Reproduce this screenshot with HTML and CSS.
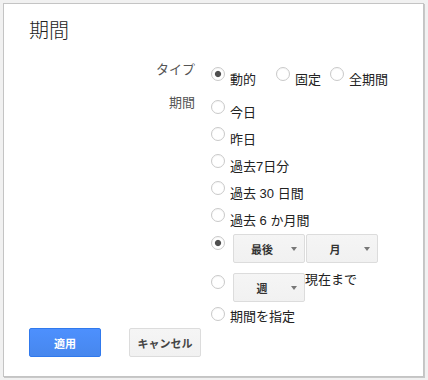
FILE: index.html
```html
<!DOCTYPE html>
<html lang="ja">
<head>
<meta charset="utf-8">
<title>期間</title>
<link rel="stylesheet" href="styles.css">
</head>
<body>
<div class="dialog">
  <h1 class="title">期間</h1>
  <div class="form">
    <div class="label">タイプ</div>
    <div class="type-opts">
      <label class="topt first"><span class="radio checked"></span><span class="txt">動的</span></label>
      <label class="topt second"><span class="radio"></span><span class="txt">固定</span></label>
      <label class="topt"><span class="radio"></span><span class="txt">全期間</span></label>
    </div>
    <div class="label">期間</div>
    <div class="period-opts">
      <label class="opt"><span class="radio"></span><span class="txt">今日</span></label>
      <label class="opt"><span class="radio"></span><span class="txt">昨日</span></label>
      <label class="opt"><span class="radio"></span><span class="txt">過去7日分</span></label>
      <label class="opt"><span class="radio"></span><span class="txt">過去 30 日間</span></label>
      <label class="opt"><span class="radio"></span><span class="txt">過去 6 か月間</span></label>
      <div class="opt sel first-sel">
        <span class="radio checked"></span>
        <div class="selects">
          <div class="dd"><span class="dd-text">最後</span><span class="arrow"></span></div>
          <div class="dd"><span class="dd-text">月</span><span class="arrow"></span></div>
        </div>
      </div>
      <div class="opt sel second-sel">
        <span class="radio"></span>
        <div class="selects">
          <div class="dd"><span class="dd-text">週</span><span class="arrow"></span></div>
          <span class="after">現在まで</span>
        </div>
      </div>
      <label class="opt last"><span class="radio"></span><span class="txt">期間を指定</span></label>
    </div>
  </div>
  <div class="buttons">
    <button class="btn primary">適用</button>
    <button class="btn">キャンセル</button>
  </div>
</div>
</body>
</html>
```

FILE: styles.css
```css
html, body {
  margin: 0;
  padding: 0;
}

body {
  background: #f1f1f1;
  font-family: "Liberation Sans", "Noto Sans CJK JP", sans-serif;
  color: #222;
  padding: 3px;
}

.dialog {
  box-sizing: border-box;
  width: 421px;
  height: 374px;
  background: #fff;
  border: 1px solid #c4c4c4;
  box-shadow: 1px 1px 0 #c8c8c8;
  padding-top: 15px;
}

.title {
  margin: 0;
  padding-left: 25px;
  font-size: 20px;
  line-height: 24px;
  font-weight: 300;
  color: #222;
}

.form {
  margin-top: 19px;
  display: grid;
  grid-template-columns: 191px 1fr;
  column-gap: 16px;
  row-gap: 9px;
  align-items: start;
}

.label {
  text-align: right;
  font-size: 13px;
  line-height: 16px;
  color: #555;
}

.radio {
  box-sizing: border-box;
  flex: none;
  width: 14px;
  height: 14px;
  border: 1px solid #c9c9c9;
  border-radius: 50%;
  background: #fff;
  box-shadow: inset 0 1px 1px rgba(0, 0, 0, 0.04);
}

.radio.checked {
  background: radial-gradient(circle, #4f4f4f 0, #4f4f4f 2.6px, #fff 3.6px);
}

.txt {
  font-size: 13px;
  line-height: 16px;
  margin-left: 5px;
  margin-top: 5px;
  color: #222;
}

.type-opts {
  display: flex;
  align-items: flex-start;
  padding-top: 5px;
  height: 19px;
}

.topt {
  display: flex;
  align-items: flex-start;
}

.topt.first {
  margin-right: 20px;
}

.topt.second {
  margin-right: 9px;
}

.period-opts {
  display: flex;
  flex-direction: column;
  padding-top: 5px;
}

.opt {
  display: flex;
  align-items: flex-start;
  height: 27px;
}

.opt.sel {
  height: auto;
}

.opt.sel .radio {
  margin-top: 2px;
}

.first-sel {
  margin-top: -1px;
}

.second-sel {
  margin-top: 10px;
}

.opt.last {
  margin-top: 5px;
  height: auto;
}

.opt.last .txt {
  margin-top: 2px;
}

.selects {
  display: flex;
  align-items: flex-start;
  margin-left: 8px;
  gap: 1px;
}

.dd {
  box-sizing: border-box;
  width: 72px;
  height: 29px;
  display: flex;
  align-items: center;
  background: linear-gradient(#f5f5f5, #f1f1f1);
  border: 1px solid #dcdcdc;
  border-radius: 2px;
}

.dd-text {
  flex: 1;
  text-align: center;
  font-size: 11px;
  font-weight: bold;
  color: #333;
  margin-left: 3px;
}

.arrow {
  width: 0;
  height: 0;
  border-left: 3px solid transparent;
  border-right: 3px solid transparent;
  border-top: 4px solid #777;
  margin-right: 7px;
  margin-left: 4px;
}

.after {
  font-size: 13px;
  line-height: 16px;
  margin-top: -1px;
  margin-left: -1px;
  color: #222;
}

.buttons {
  display: flex;
  gap: 28px;
  padding-left: 25px;
  margin-top: 3px;
}

.btn {
  box-sizing: border-box;
  width: 72px;
  height: 29px;
  padding: 0;
  border: 1px solid #dcdcdc;
  border-radius: 2px;
  background: linear-gradient(#f5f5f5, #f1f1f1);
  font-family: "Liberation Sans", "Noto Sans CJK JP", sans-serif;
  font-size: 11px;
  font-weight: bold;
  color: #444;
}

.btn.primary {
  background: linear-gradient(#4d90fe, #4787ed);
  border-color: #3079ed;
  color: #fff;
}
```
